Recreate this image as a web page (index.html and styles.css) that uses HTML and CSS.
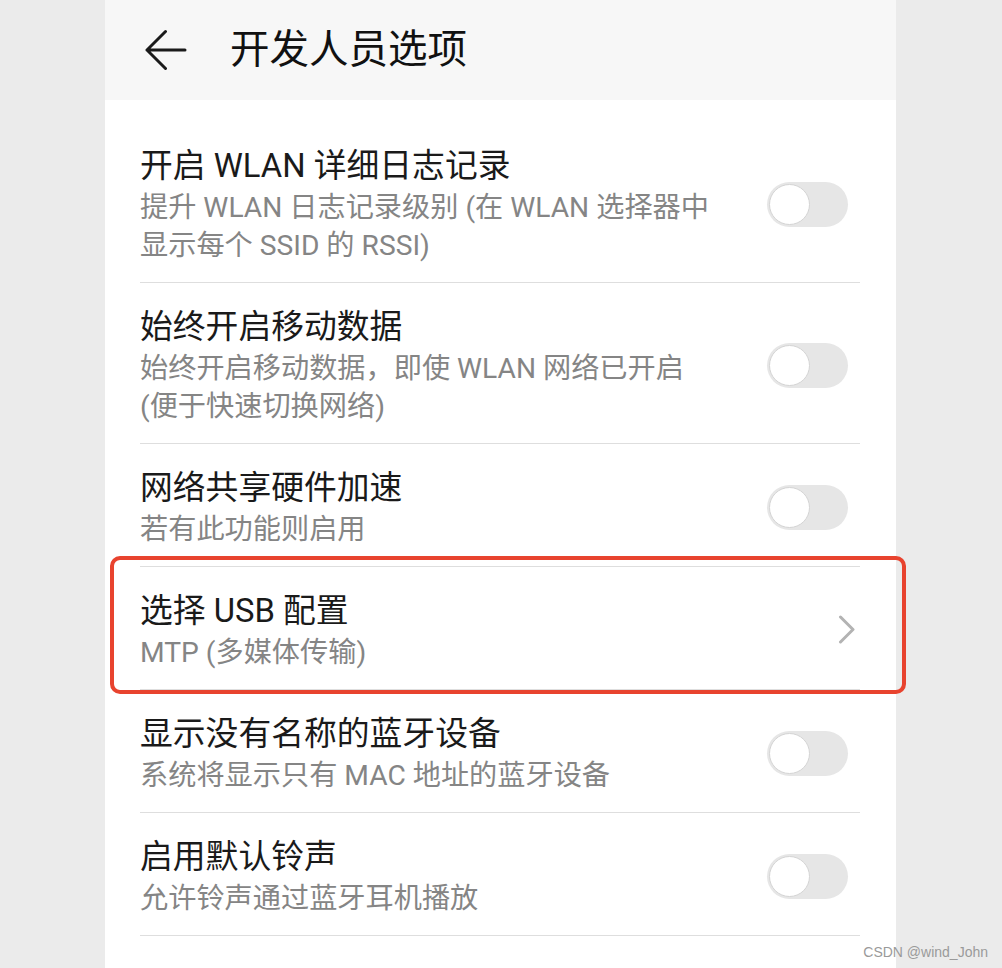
FILE: index.html
```html
<!DOCTYPE html>
<html lang="zh-CN">
<head>
<meta charset="utf-8">
<title>开发人员选项</title>
<link rel="stylesheet" href="styles.css">
</head>
<body>
<div class="panel">
  <header class="header">
    <svg class="back" width="42" height="42" viewBox="0 0 42 42" aria-hidden="true">
      <path d="M20.5 2.5 L2 21 L20.5 39.5 M2 21 H40" fill="none" stroke="#1a1a1a" stroke-width="3" stroke-linecap="round" stroke-linejoin="round"/>
    </svg>
    <h1 class="header-title">开发人员选项</h1>
  </header>
  <ul class="list">
    <li class="row">
      <div class="text">
        <div class="title">开启 WLAN 详细日志记录</div>
        <div class="sub">提升 WLAN 日志记录级别 (在 WLAN 选择器中显示每个 SSID 的 RSSI)</div>
      </div>
      <span class="toggle"><span class="knob"></span></span>
    </li>
    <li class="row">
      <div class="text">
        <div class="title">始终开启移动数据</div>
        <div class="sub">始终开启移动数据，即使 WLAN 网络已开启 (便于快速切换网络)</div>
      </div>
      <span class="toggle"><span class="knob"></span></span>
    </li>
    <li class="row">
      <div class="text">
        <div class="title">网络共享硬件加速</div>
        <div class="sub">若有此功能则启用</div>
      </div>
      <span class="toggle"><span class="knob"></span></span>
    </li>
    <li class="row">
      <div class="text">
        <div class="title">选择 USB 配置</div>
        <div class="sub">MTP (多媒体传输)</div>
      </div>
      <svg class="chevron" width="18" height="30" viewBox="0 0 18 30" aria-hidden="true">
        <path d="M2.5 2 L15 14.5 L2.5 27" fill="none" stroke="#b3b3b3" stroke-width="3" stroke-linecap="round" stroke-linejoin="round"/>
      </svg>
    </li>
    <li class="row">
      <div class="text">
        <div class="title">显示没有名称的蓝牙设备</div>
        <div class="sub">系统将显示只有 MAC 地址的蓝牙设备</div>
      </div>
      <span class="toggle"><span class="knob"></span></span>
    </li>
    <li class="row">
      <div class="text">
        <div class="title">启用默认铃声</div>
        <div class="sub">允许铃声通过蓝牙耳机播放</div>
      </div>
      <span class="toggle"><span class="knob"></span></span>
    </li>
  </ul>
</div>
<div class="highlight"></div>
<div class="watermark">CSDN @wind_John</div>
</body>
</html>
```

FILE: styles.css
```css
html, body {
  margin: 0;
  padding: 0;
  height: 968px;
  overflow: hidden;
}
body {
  background: #ebebeb;
  font-family: Roboto, "Noto Sans CJK SC", sans-serif;
  position: relative;
}
.panel {
  margin-left: 105px;
  width: 791px;
  height: 968px;
  background: #ffffff;
}
.header {
  height: 100px;
  background: #f7f7f7;
  display: flex;
  align-items: center;
  padding-left: 40px;
  box-sizing: border-box;
}
.back {
  display: block;
  flex: none;
}
.header-title {
  margin: 0 0 0 43px;
  font-size: 39.5px;
  font-weight: 400;
  color: #111111;
  line-height: 48px;
  font-family: Roboto, "Noto Sans CJK SC", sans-serif;
}
.list {
  list-style: none;
  margin: 0;
  padding: 22px 36px 0 35px;
}
.row {
  display: flex;
  align-items: center;
  padding: 21px 0 17px;
  border-bottom: 1px solid #dedede;
}
.text {
  flex: none;
  width: 578px;
  margin-right: auto;
}
.title {
  font-size: 32.8px;
  line-height: 46px;
  color: #1a1a1a;
}
.sub {
  font-size: 28.2px;
  line-height: 38px;
  color: #858585;
}
.toggle {
  flex: none;
  width: 81px;
  height: 45px;
  border-radius: 23px;
  background: #e6e6e6;
  margin-right: 12px;
  display: flex;
  align-items: center;
  padding: 0 2px;
  box-sizing: border-box;
}
.knob {
  width: 41px;
  height: 41px;
  border-radius: 50%;
  background: #ffffff;
  border: 1.5px solid #d4d4d4;
  box-sizing: border-box;
}
.chevron {
  flex: none;
  display: block;
  margin-right: 4px;
}
.highlight {
  position: absolute;
  left: 110px;
  top: 556px;
  width: 796px;
  height: 138px;
  border: 4px solid #e8432e;
  border-radius: 10px;
  box-sizing: border-box;
}
.watermark {
  position: absolute;
  right: 14px;
  top: 943px;
  font-family: "Liberation Sans", Arial, sans-serif;
  font-size: 14px;
  line-height: 18px;
  color: #9a9a9a;
}
```
